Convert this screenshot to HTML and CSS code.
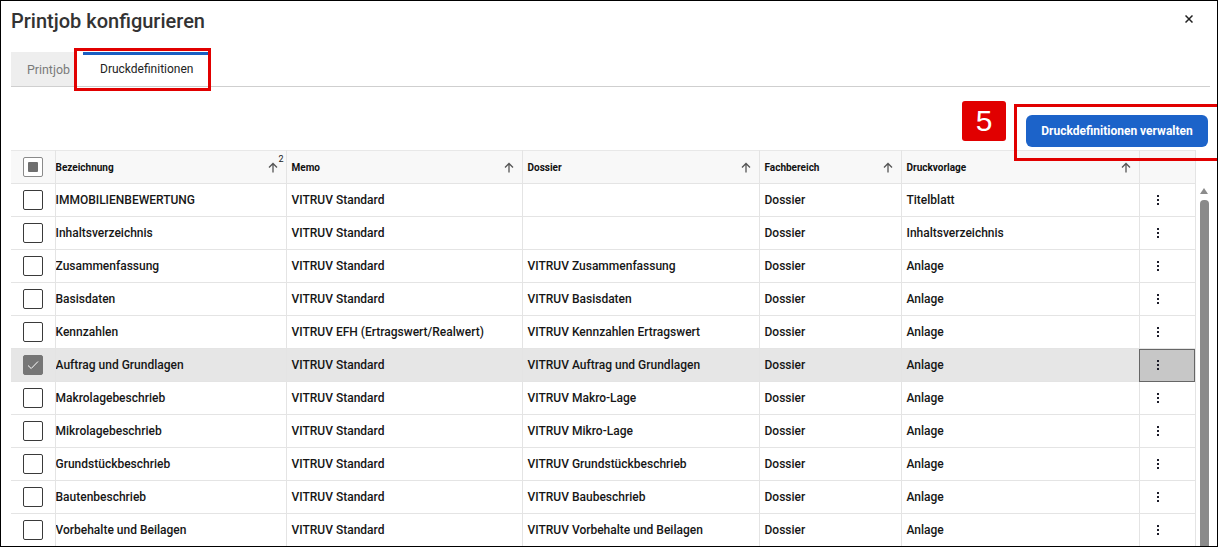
FILE: index.html
```html
<!DOCTYPE html>
<html lang="de">
<head>
<meta charset="utf-8">
<title>Printjob konfigurieren</title>
<link rel="stylesheet" href="styles.css">
</head>
<body>
<div class="dialog">
  <div class="dlg-head">
    <h1 class="dlg-title">Printjob konfigurieren</h1>
    <button class="dlg-close" aria-label="Schliessen">
      <svg width="8" height="8" viewBox="0 0 8 8"><path d="M0.5 0.5L7.5 7.5M7.5 0.5L0.5 7.5" stroke="#222" stroke-width="1.5"/></svg>
    </button>
  </div>

  <div class="tabs">
    <div class="tab">Printjob</div>
    <div class="tab tab-active">Druckdefinitionen</div>
  </div>

  <div class="toolbar">
    <button class="btn-primary">Druckdefinitionen verwalten</button>
  </div>

  <div class="grid-wrap">
    <table class="grid">
      <colgroup>
        <col class="c-check"><col class="c-bez"><col class="c-memo"><col class="c-dos"><col class="c-fach"><col class="c-vor"><col class="c-act">
      </colgroup>
      <thead>
        <tr>
          <th class="cell-check"><span class="cb cb-indet"></span></th>
          <th class="first"><div class="th-in"><span>Bezeichnung</span><span class="sort"><svg width="10" height="11" viewBox="0 0 10 11"><path d="M5 10.5V1.5M1 5.5L5 1.5L9 5.5" fill="none" stroke="#555" stroke-width="1.3"/></svg><sup class="sort-idx">2</sup></span></div></th>
          <th><div class="th-in"><span>Memo</span><span class="sort"><svg width="10" height="11" viewBox="0 0 10 11"><path d="M5 10.5V1.5M1 5.5L5 1.5L9 5.5" fill="none" stroke="#555" stroke-width="1.3"/></svg></span></div></th>
          <th><div class="th-in"><span>Dossier</span><span class="sort"><svg width="10" height="11" viewBox="0 0 10 11"><path d="M5 10.5V1.5M1 5.5L5 1.5L9 5.5" fill="none" stroke="#555" stroke-width="1.3"/></svg></span></div></th>
          <th><div class="th-in"><span>Fachbereich</span><span class="sort"><svg width="10" height="11" viewBox="0 0 10 11"><path d="M5 10.5V1.5M1 5.5L5 1.5L9 5.5" fill="none" stroke="#555" stroke-width="1.3"/></svg></span></div></th>
          <th><div class="th-in"><span>Druckvorlage</span><span class="sort"><svg width="10" height="11" viewBox="0 0 10 11"><path d="M5 10.5V1.5M1 5.5L5 1.5L9 5.5" fill="none" stroke="#555" stroke-width="1.3"/></svg></span></div></th>
          <th class="cell-act"></th>
        </tr>
      </thead>
      <tbody>
        <tr><td class="cell-check"><span class="cb"></span></td><td class="first">IMMOBILIENBEWERTUNG</td><td>VITRUV Standard</td><td></td><td>Dossier</td><td>Titelblatt</td><td class="cell-act"><span class="kebab"><i></i><i></i><i></i></span></td></tr>
        <tr><td class="cell-check"><span class="cb"></span></td><td class="first">Inhaltsverzeichnis</td><td>VITRUV Standard</td><td></td><td>Dossier</td><td>Inhaltsverzeichnis</td><td class="cell-act"><span class="kebab"><i></i><i></i><i></i></span></td></tr>
        <tr><td class="cell-check"><span class="cb"></span></td><td class="first">Zusammenfassung</td><td>VITRUV Standard</td><td>VITRUV Zusammenfassung</td><td>Dossier</td><td>Anlage</td><td class="cell-act"><span class="kebab"><i></i><i></i><i></i></span></td></tr>
        <tr><td class="cell-check"><span class="cb"></span></td><td class="first">Basisdaten</td><td>VITRUV Standard</td><td>VITRUV Basisdaten</td><td>Dossier</td><td>Anlage</td><td class="cell-act"><span class="kebab"><i></i><i></i><i></i></span></td></tr>
        <tr><td class="cell-check"><span class="cb"></span></td><td class="first">Kennzahlen</td><td>VITRUV EFH (Ertragswert/Realwert)</td><td>VITRUV Kennzahlen Ertragswert</td><td>Dossier</td><td>Anlage</td><td class="cell-act"><span class="kebab"><i></i><i></i><i></i></span></td></tr>
        <tr class="selected"><td class="cell-check"><span class="cb cb-checked"><svg width="12" height="10" viewBox="0 0 12 10"><path d="M1 5.5L4.2 8.5L11 1.5" fill="none" stroke="#fff" stroke-width="1"/></svg></span></td><td class="first">Auftrag und Grundlagen</td><td>VITRUV Standard</td><td>VITRUV Auftrag und Grundlagen</td><td>Dossier</td><td>Anlage</td><td class="cell-act act-focus"><span class="kebab"><i></i><i></i><i></i></span></td></tr>
        <tr><td class="cell-check"><span class="cb"></span></td><td class="first">Makrolagebeschrieb</td><td>VITRUV Standard</td><td>VITRUV Makro-Lage</td><td>Dossier</td><td>Anlage</td><td class="cell-act"><span class="kebab"><i></i><i></i><i></i></span></td></tr>
        <tr><td class="cell-check"><span class="cb"></span></td><td class="first">Mikrolagebeschrieb</td><td>VITRUV Standard</td><td>VITRUV Mikro-Lage</td><td>Dossier</td><td>Anlage</td><td class="cell-act"><span class="kebab"><i></i><i></i><i></i></span></td></tr>
        <tr><td class="cell-check"><span class="cb"></span></td><td class="first">Grundstückbeschrieb</td><td>VITRUV Standard</td><td>VITRUV Grundstückbeschrieb</td><td>Dossier</td><td>Anlage</td><td class="cell-act"><span class="kebab"><i></i><i></i><i></i></span></td></tr>
        <tr><td class="cell-check"><span class="cb"></span></td><td class="first">Bautenbeschrieb</td><td>VITRUV Standard</td><td>VITRUV Baubeschrieb</td><td>Dossier</td><td>Anlage</td><td class="cell-act"><span class="kebab"><i></i><i></i><i></i></span></td></tr>
        <tr><td class="cell-check"><span class="cb"></span></td><td class="first">Vorbehalte und Beilagen</td><td>VITRUV Standard</td><td>VITRUV Vorbehalte und Beilagen</td><td>Dossier</td><td>Anlage</td><td class="cell-act"><span class="kebab"><i></i><i></i><i></i></span></td></tr>
      </tbody>
    </table>
    <div class="vscroll">
      <span class="vs-up"></span>
      <span class="vs-thumb"></span>
    </div>
  </div>
</div>

<div class="annot annot-tab"></div>
<div class="annot annot-btn"></div>
<div class="annot-badge">5</div>
</body>
</html>
```

FILE: styles.css
```css
* { box-sizing: border-box; }

html, body {
  margin: 0;
  padding: 0;
}

body {
  width: 1218px;
  height: 547px;
  border: 1px solid #000;
  background: #fff;
  font-family: Roboto, "Liberation Sans", Arial, sans-serif;
  color: #1f1f1f;
  overflow: hidden;
  position: relative;
}

.dialog {
  padding: 8px 6px 0 10px;
  display: flex;
  flex-direction: column;
}

.dlg-head {
  display: flex;
  align-items: center;
  justify-content: space-between;
  height: 24px;
}

.dlg-title {
  margin: 0;
  font-size: 20px;
  font-weight: 500;
  line-height: 24px;
  color: #333;
}

.dlg-close {
  border: 0;
  background: transparent;
  padding: 0;
  width: 8px;
  height: 8px;
  margin-right: 18px;
  margin-top: -4px;
  display: flex;
}

.tabs {
  margin-top: 19px;
  display: flex;
  gap: 8px;
  border-bottom: 1px solid #cfcfcf;
  height: 35px;
  margin-right: 1px;
}

.tab {
  height: 34px;
  width: 64px;
  display: flex;
  align-items: center;
  padding: 0 0 0 16px;
  font-size: 12.4px;
  color: #7a7a7a;
  background: #eeeeee;
}

.tab-active {
  width: 125px;
  background: #fff;
  color: #222;
  font-size: 12px;
  border-top: 3px solid #1a5fc2;
  padding: 0 0 3px 17px;
}

.toolbar {
  display: flex;
  justify-content: flex-end;
  padding: 28px 3px 3px 0;
}

.btn-primary {
  width: 182px;
  height: 32px;
  border: 0;
  border-radius: 6px;
  background: #1c63c9;
  color: #fff;
  font-family: Roboto, "Liberation Sans", Arial, sans-serif;
  font-size: 12px;
  font-weight: 700;
  padding: 0;
}

.grid-wrap {
  display: flex;
  align-items: flex-start;
}

.grid {
  width: 1184px;
  table-layout: fixed;
  border-collapse: collapse;
  font-size: 12px;
}

.c-check { width: 44px; }
.c-bez { width: 231px; }
.c-memo { width: 236px; }
.c-dos { width: 237px; }
.c-fach { width: 142px; }
.c-vor { width: 238px; }
.c-act { width: 56px; }

.grid th,
.grid td {
  height: 33px;
  padding: 0 0 0 5px;
  border: 1px solid #e4e4e4;
  text-align: left;
  white-space: nowrap;
  overflow: hidden;
}

.grid tr > :first-child { border-left: 0; }

.grid thead th {
  background: #f8f8f8;
  font-size: 10px;
  font-weight: 700;
  color: #111;
  border-top: 1px solid #e8e8e8;
}

.grid .first { padding-left: 0; }

.th-in {
  display: flex;
  align-items: center;
  justify-content: space-between;
  padding-right: 8px;
}

.sort {
  position: relative;
  display: flex;
  align-items: center;
}

.sort-idx {
  position: absolute;
  right: -6px;
  top: -7px;
  font-size: 9px;
  font-weight: 400;
  line-height: 1;
  color: #222;
}

.grid td {
  color: #161616;
  font-weight: 500;
}

.grid .cell-check {
  padding: 0;
  text-align: center;
}

.cb {
  display: inline-flex;
  align-items: center;
  justify-content: center;
  width: 20px;
  height: 20px;
  border: 1px solid #3a3a3a;
  border-radius: 2px;
  vertical-align: middle;
  background: #fff;
}

.cb-indet {
  border-color: #8a8a8a;
}

.cb-indet::after {
  content: "";
  width: 10px;
  height: 10px;
  background: #6f6f6f;
  border-radius: 1px;
}

.cb-checked {
  background: #767676;
  border-color: #767676;
}

.grid tr.selected td {
  background: #e6e6e6;
}

.grid .cell-act {
  padding: 0 0 0 17px;
  text-align: left;
}

.grid tr.selected td.act-focus {
  background: #c7c7c7;
  outline: 1px solid #666;
  outline-offset: -1px;
}

.kebab {
  display: inline-flex;
  flex-direction: column;
  gap: 2px;
  vertical-align: middle;
  margin-top: -2px;
}

.kebab i {
  display: block;
  width: 2px;
  height: 2px;
  background: #1d1d2a;
}

.vscroll {
  width: 15px;
  margin-top: 33px;
  padding: 5px 2px 0 4px;
  display: flex;
  flex-direction: column;
  align-items: center;
  gap: 6px;
  height: 364px;
}

.vs-up {
  width: 0;
  height: 0;
  border-left: 4.5px solid transparent;
  border-right: 4.5px solid transparent;
  border-bottom: 6px solid #8c8c8c;
}

.vs-thumb {
  width: 9px;
  flex: 1;
  background: #8a8a8a;
  border-radius: 4px 4px 0 0;
}

/* annotation overlays */
.annot {
  position: absolute;
  border: 3px solid #e10000;
  pointer-events: none;
}

.annot-tab {
  left: 73px;
  top: 47px;
  width: 137px;
  height: 43px;
}

.annot-btn {
  left: 1013px;
  top: 103px;
  width: 210px;
  height: 57px;
}

.annot-badge {
  position: absolute;
  left: 961px;
  top: 100px;
  width: 44px;
  height: 40px;
  background: #e10000;
  border-radius: 3px;
  color: #fff;
  font-family: "Liberation Sans", Arial, sans-serif;
  font-size: 30px;
  line-height: 40px;
  text-align: center;
}
```
